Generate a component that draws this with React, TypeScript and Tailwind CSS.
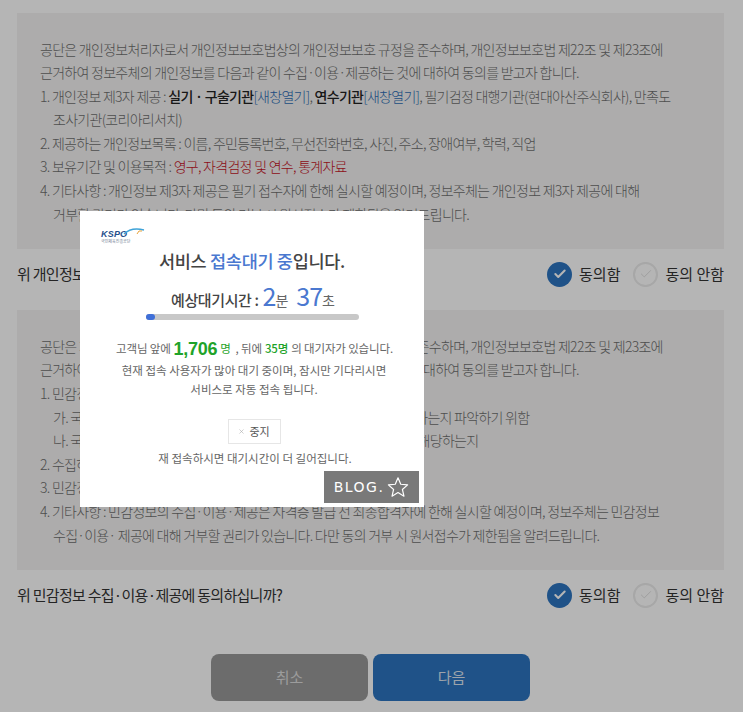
// App.tsx — consent form behind a "waiting for service" queue modal.
import { Check, X } from 'lucide-react'

const FONT = 'font-["Noto_Sans_CJK_KR","Noto_Sans",sans-serif]'

function Line({ children, indent }: { children: React.ReactNode; indent?: boolean }) {
  return <p className={indent ? 'pl-[13px] whitespace-nowrap' : 'whitespace-nowrap'}>{children}</p>
}

function Terms({ children }: { children: React.ReactNode }) {
  return (
    <div className="ml-[17px] mr-[19px] bg-[#f4f3f2] px-[23px] pb-[23px] pt-[24.5px] text-[14px] font-light leading-[23.6px] tracking-[-0.72px] text-[#6e6e6e]">
      {children}
    </div>
  )
}

function Choice({ on, label }: { on?: boolean; label: string }) {
  return (
    <span className="flex items-center gap-[7px]">
      <span
        className={
          on
            ? 'flex size-[25px] items-center justify-center rounded-full bg-[#2c74c0] text-white'
            : 'flex size-[25px] items-center justify-center rounded-full border-2 border-[#ebebeb] text-[#dcdcdc]'
        }
      >
        <Check className="size-[14px]" strokeWidth={on ? 3.5 : 1.5} />
      </span>
      {label}
    </span>
  )
}

function Consent({ question }: { question: string }) {
  return (
    <div className="ml-[17px] mr-[19px] flex h-[61px] items-center justify-between pb-[11px] text-[15px] tracking-[-0.72px] text-[#333]">
      <span>{question}</span>
      <span className="flex items-center gap-[13px] tracking-[0px]">
        <Choice on label="동의함" />
        <Choice label="동의 안함" />
      </span>
    </div>
  )
}

function QueueModal() {
  return (
    <div className="absolute left-[80px] top-[211px] h-[296px] w-[344px] bg-white">
      <div className="pl-[21px] pt-[18px]">
        <div className="relative h-[18px] w-[44px]">
          <span className="block text-[9px] font-bold italic leading-[10px] tracking-[0.2px] text-[#27508c] font-['Liberation_Sans']">
            KSPO
          </span>
          <svg className="absolute left-[22px] top-[-1px]" width="22" height="8" viewBox="0 0 22 8" fill="none">
            <path d="M1 6C6 1 13 0 21 2" stroke="#3fa3d8" strokeWidth="1.4" />
            <path d="M14 6l2-3 3 0" stroke="#e8a33a" strokeWidth="1" />
          </svg>
          <span className="block text-[4px] leading-[5px] text-[#6d7b92]">국민체육진흥공단</span>
        </div>
      </div>
      <h2 className="mt-[1px] text-center text-[17.5px] font-medium leading-[26px] tracking-[-0.3px] text-[#444]">
        서비스 <span className="text-[#4a78d0]">접속대기 중</span>입니다.
      </h2>
      <div className="mt-[6px] flex h-[30px] items-baseline justify-center pl-[2px] text-[#444]">
        <span className="text-[15px] font-medium tracking-[-0.4px]">예상대기시간 :</span>
        <span className="ml-[4px] text-[25px] leading-[30px] tracking-[-1px] text-[#4a78d0]">2</span>
        <span className="text-[14px] text-[#666]">분</span>
        <span className="ml-[8px] text-[25px] leading-[30px] tracking-[-1px] text-[#4a78d0]">37</span>
        <span className="text-[14px] text-[#666]">초</span>
      </div>
      <div className="ml-[66px] mt-[4px] h-[6px] w-[213px] rounded-full bg-[#c8c8c8]">
        <div className="h-[6px] w-[9px] rounded-full bg-[#3f6fd8]" />
      </div>
      <div className="mt-[16px] flex h-[26px] items-center justify-center pl-[5px] text-[11.5px] tracking-[-0.15px] text-[#666]">
        고객님 앞에
        <b className="mx-[3px] font-['Liberation_Sans'] text-[18px] font-bold tracking-[-0.3px] text-[#1fa32a]">1,706</b>
        <span className="text-[#1fa32a]">명</span>
        <span className="ml-[5px]">, 뒤에</span>
        <span className="mx-[3px] font-medium text-[#1fa32a]">35명</span>
        의 대기자가 있습니다.
      </div>
      <p className="-mt-[1px] pl-[4px] text-center text-[11.5px] leading-[19px] text-[#666]">
        현재 접속 사용자가 많아 대기 중이며, 잠시만 기다리시면
        <br />
        서비스로 자동 접속 됩니다.
      </p>
      <div className="mt-[20px] flex justify-center pl-[4px]">
        <span className="flex h-[25px] w-[53px] items-center justify-center gap-[4px] border border-[#e6e6e6] text-[11px] text-[#555]">
          <X className="size-[7px] text-[#aaa]" strokeWidth={2} />
          중지
        </span>
      </div>
      <p className="mt-[6px] pl-[6px] text-center text-[11.5px] leading-[16px] text-[#666]">
        재 접속하시면 대기시간이 더 길어집니다.
      </p>
      <div className="absolute left-[244px] top-[260px] flex h-[32px] w-[95px] items-center justify-center gap-[3px] bg-[#797979] text-white">
        <span className="font-['DejaVu_Sans'] text-[14px] tracking-[1.5px]">BLOG.</span>
        <svg width="22" height="22" viewBox="0 0 24 24" fill="none" stroke="#fff" strokeWidth="1.3" strokeLinejoin="round">
          <path d="M12 2l3 7 7.500 .7-5.700 5 1.700 7.300-6.500-3.900-6.500 3.900 1.700-7.300-5.700-5 7.500-.7z" />
        </svg>
      </div>
    </div>
  )
}

export default function App() {
  return (
    <div className={`relative h-[712px] w-[743px] overflow-hidden bg-white ${FONT}`}>
      <div className="pt-[13px]">
        <Terms>
          <Line>공단은 개인정보처리자로서 개인정보보호법상의 개인정보보호 규정을 준수하며, 개인정보보호법 제22조 및 제23조에</Line>
          <Line>근거하여 정보주체의 개인정보를 다음과 같이 수집·이용·제공하는 것에 대하여 동의를 받고자 합니다.</Line>
          <Line>
            1. 개인정보 제3자 제공 : <b className="font-medium text-[#222]">실기 · 구술기관</b>
            <span className="text-[#2c6cb5]">[새창열기]</span>, <b className="font-medium text-[#222]">연수기관</b>
            <span className="text-[#2c6cb5]">[새창열기]</span>, 필기검정 대행기관(현대아산주식회사), 만족도
          </Line>
          <Line indent>조사기관(코리아리서치)</Line>
          <Line>2. 제공하는 개인정보목록 : 이름, 주민등록번호, 무선전화번호, 사진, 주소, 장애여부, 학력, 직업</Line>
          <Line>
            3. 보유기간 및 이용목적 : <span className="text-[#c5121f]">영구, 자격검정 및 연수, 통계자료</span>
          </Line>
          <Line>4. 기타사항 : 개인정보 제3자 제공은 필기 접수자에 한해 실시할 예정이며, 정보주체는 개인정보 제3자 제공에 대해</Line>
          <Line indent>거부할 권리가 있습니다. 다만 동의 거부 시 원서접수가 제한됨을 알려드립니다.</Line>
        </Terms>
        <Consent question="위 개인정보 제3자 제공에 동의하십니까?" />
        <Terms>
          <Line>공단은 개인정보처리자로서 개인정보보호법상의 개인정보보호 규정을 준수하며, 개인정보보호법 제22조 및 제23조에</Line>
          <Line>근거하여 정보주체의 개인정보를 다음과 같이 수집·이용·제공하는 것에 대하여 동의를 받고자 합니다.</Line>
          <Line>1. 민감정보 수집·이용 목적</Line>
          <Line indent>가. 국민체육진흥법에 따른 체육 자격 취득에 필요한 결격사유에 해당하는지 파악하기 위함</Line>
          <Line indent>나. 국민체육진흥법에 따른 체육 자격 응시에 필요한 응시자격 요건에 해당하는지</Line>
          <Line>2. 수집하는 민감정보</Line>
          <Line>3. 민감정보 보유 및 이용기간</Line>
          <Line>4. 기타사항 : 민감정보의 수집·이용·제공은 자격증 발급 전 최종합격자에 한해 실시할 예정이며, 정보주체는 민감정보</Line>
          <Line indent>수집·이용· 제공에 대해 거부할 권리가 있습니다. 다만 동의 거부 시 원서접수가 제한됨을 알려드립니다.</Line>
        </Terms>
        <Consent question="위 민감정보 수집·이용·제공에 동의하십니까?" />
        <div className="mt-[23px] flex justify-center gap-[5px] pr-[2px] text-[15px]">
          <button className="h-[47px] w-[157px] rounded-[8px] bg-[#999] text-[#dcdcdc]">취소</button>
          <button className="h-[47px] w-[157px] rounded-[8px] bg-[#2c74c0] text-[#dce6f0]">다음</button>
        </div>
      </div>
      <div className="absolute inset-0 bg-black/[0.29]" />
      <QueueModal />
    </div>
  )
}
